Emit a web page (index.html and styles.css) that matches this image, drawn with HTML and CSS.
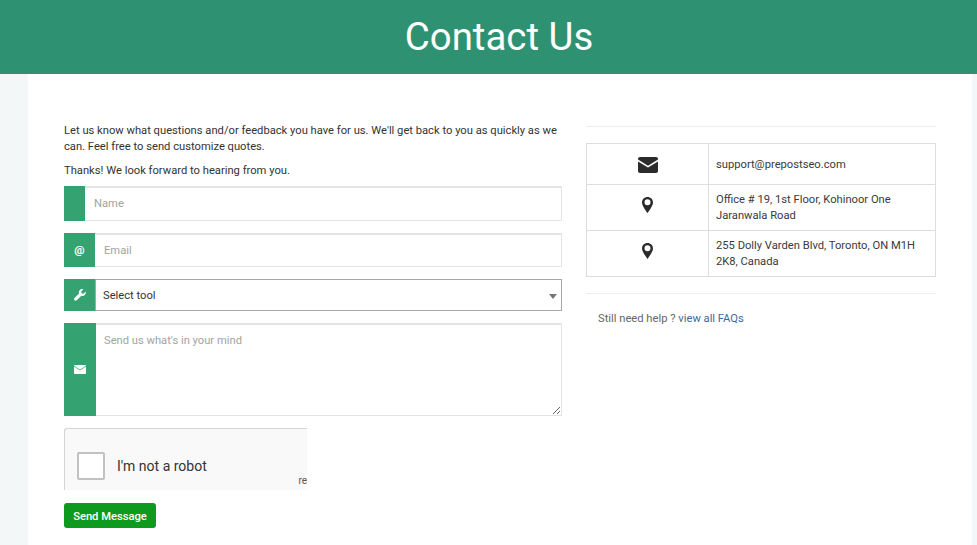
FILE: index.html
```html
<!DOCTYPE html>
<html>
    <head>
        <meta charset="utf-8">
        <title>Contact Us</title>
        <link rel="stylesheet" href="styles.css">
    </head>
    <body>
        <div class="banner"><h1>Contact Us</h1></div>
        <div class="page">
            <div class="form-col">
                <p class="intro">Let us know what questions and/or feedback you have for us. We'll get back to you as quickly as we can. Feel free to send customize quotes.</p>
                <p class="intro thanks">Thanks! We look forward to hearing from you.</p>
                <div class="field field-name">
                    <span class="addon addon-name"></span>
                    <input class="control" type="text" placeholder="Name">
                </div>
                <div class="field field-email">
                    <span class="addon addon-wide"><b class="at">@</b></span>
                    <input class="control" type="text" placeholder="Email">
                </div>
                <div class="field field-select">
                    <span class="addon addon-wide">
                        <svg class="glyph" viewBox="0 0 12 12"><path d="M11.6 2.6 9.5 4.7 7.6 4.3 7.2 2.4 9.3.3C7.9-.2 6.400.2 5.600 1.200 4.800 2.100 4.600 3.400 5 4.500L.5 9c-.6.600-.6 1.600 0 2.300.6.600 1.700.6 2.300 0L7.300 6.800c1.100.4 2.400.2 3.300-.6 1-.9 1.400-2.300 1-3.600Z" fill="#fff"/></svg>
                    </span>
                    <div class="select-box">
                        <span>Select tool</span>
                        <i class="caret"></i>
                    </div>
                </div>
                <div class="field field-msg">
                    <span class="addon addon-tall">
                        <svg class="glyph mail-small" viewBox="0 0 12 9"><path d="M0 .8C0 .3.300 0 .8 0h10.400c.5 0 .8.300.8.800L6 4.700 0 .8Z" fill="#fff"/><path d="M0 1.600 6 5.500l6-3.900v6.600c0 .5-.3.800-.8.800H.8C.3 9 0 8.700 0 8.200V1.600Z" fill="#fff"/></svg>
                    </span>
                    <textarea class="control area" placeholder="Send us what's in your mind"></textarea>
                </div>
                <div class="captcha">
                    <span class="tick"></span>
                    <span class="robot">I'm not a robot</span>
                    <span class="re">re</span>
                </div>
                <button class="send">Send Message</button>
            </div>
            <div class="info-col">
                <table class="info">
                    <tr>
                        <td class="icon-cell icon-mail">
                            <svg class="mail-big" viewBox="0 0 20 16"><path d="M0 2c0-1.100.9-2 2-2h16c1.100 0 2 .9 2 2v.6L10 8.800 0 2.600V2Z" fill="#2b2b2b"/><path d="M0 4.400 10 10.600 20 4.400V14c0 1.100-.9 2-2 2H2c-1.100 0-2-.9-2-2V4.400Z" fill="#2b2b2b"/></svg>
                        </td>
                        <td class="text-cell mail-cell">support@prepostseo.com</td>
                    </tr>
                    <tr>
                        <td class="icon-cell">
                            <svg class="pin" viewBox="0 0 11 16"><path fill-rule="evenodd" d="M5.500 0C8.600 0 11 2.400 11 5.400 11 8.400 7.700 12.900 5.500 16 3.300 12.900 0 8.400 0 5.400 0 2.400 2.400 0 5.500 0Zm0 2.300a3 3 0 1 0 0 6 3 3 0 0 0 0-6Z" fill="#2b2b2b"/></svg>
                        </td>
                        <td class="text-cell">Office # 19, 1st Floor, Kohinoor One Jaranwala Road</td>
                    </tr>
                    <tr>
                        <td class="icon-cell">
                            <svg class="pin" viewBox="0 0 11 16"><path fill-rule="evenodd" d="M5.500 0C8.600 0 11 2.400 11 5.400 11 8.400 7.700 12.900 5.500 16 3.300 12.900 0 8.400 0 5.400 0 2.400 2.400 0 5.500 0Zm0 2.300a3 3 0 1 0 0 6 3 3 0 0 0 0-6Z" fill="#2b2b2b"/></svg>
                        </td>
                        <td class="text-cell">255 Dolly Varden Blvd, Toronto, ON M1H 2K8, Canada</td>
                    </tr>
                </table>
                <p class="help">Still need help ? <a href="#">view all FAQs</a></p>
            </div>
        </div>
    </body>
</html>
```
FILE: styles.css
```css
*{
    box-sizing:border-box;
}
html,body{
    margin:0;
    padding:0;
    height:100%;
    overflow:hidden;
}
body{
    background-color:#f3f7f8;
    font-family:Roboto,"Liberation Sans",sans-serif;
    font-size:11.2px;
    color:#333;
}
.banner{
    height:74px;
    padding:0 7px 0 28px;
    background-color:#2e9272;
    text-align:center;
    color:#fff;
}
.banner h1{
    margin:0;
    font-size:38.4px;
    font-weight:400;
    line-height:74px;
}
.page{
    display:flex;
    margin:0 0 0 28px;
    width:944px;
    height:471px;
    background-color:#fff;
    padding:49px 36px 0 36px;
    gap:24px;
}
.form-col{
    width:498px;
    flex:none;
}
.info-col{
    flex:1;
    margin-top:3px;
    border-top:1px solid #eee;
    padding-top:16px;
}
.intro{
    margin:0;
    line-height:16px;
    color:#333;
}
.thanks{
    margin:8px 0 7px;
}
.field{
    display:flex;
    width:498px;
    margin-bottom:12px;
}
.field-name{
    height:35px;
}
.field-name .control{
    padding-bottom:2px;
}
.field-email{
    height:34px;
}
.field-select{
    height:32px;
}
.field-msg{
    height:93px;
    margin-bottom:12px;
}
.addon{
    display:flex;
    align-items:center;
    justify-content:center;
    flex:none;
    background-color:#34a371;
    color:#fff;
}
.addon-name{
    width:21px;
}
.addon-wide{
    width:31px;
}
.addon-tall{
    width:32px;
}
.at{
    font-size:11.5px;
}
.glyph{
    display:block;
    width:12px;
    height:12px;
}
.mail-small{
    height:9px;
}
.control{
    flex:1;
    min-width:0;
    border:1px solid #e4e4e4;
    border-top-width:2px;
    border-left:0;
    padding:0 9px;
    font-family:inherit;
    font-size:11.2px;
    color:#333;
    outline:none;
}
.control::placeholder{
    color:#a3a3a3;
    opacity:1;
}
.area{
    padding-top:9px;
    padding-left:8px;
    resize:both;
    line-height:14px;
}
.select-box{
    display:flex;
    align-items:center;
    justify-content:space-between;
    flex:1;
    border:1px solid #a6a6a6;
    padding:1px 4px 0 7px;
    color:#333;
}
.caret{
    width:0;
    height:0;
    border-left:4px solid transparent;
    border-right:4px solid transparent;
    border-top:5px solid #777;
    margin-top:2px;
}
.captcha{
    display:flex;
    position:relative;
    align-items:center;
    width:243px;
    height:62px;
    background-color:#f9f9f9;
    border:1px solid #d3d3d3;
    border-width:1px 0 0 1px;
    border-radius:3px 0 0 0;
    padding:12px 0 0 12px;
}
.tick{
    width:28px;
    height:28px;
    background-color:#fff;
    border:2px solid #c1c1c1;
    border-radius:2px;
    flex:none;
}
.robot{
    margin-left:12px;
    font-size:14px;
    color:#333;
}
.re{
    position:absolute;
    right:0;
    bottom:3px;
    font-size:10px;
    line-height:12px;
    color:#555;
}
.send{
    display:block;
    margin-top:13px;
    width:92px;
    height:25px;
    padding:1px 0 0;
    background-color:#0e9a1e;
    border:0;
    border-radius:3px;
    color:#fff;
    font-family:inherit;
    font-size:11.2px;
    font-weight:500;
}
.info{
    width:100%;
    border-collapse:collapse;
}
.info td{
    border:1px solid #ddd;
}
.icon-cell{
    width:122px;
    text-align:center;
    vertical-align:top;
    padding-top:12px;
}
.icon-mail{
    padding-top:13px;
}
.icon-cell svg{
    display:block;
    margin:0 auto;
}
.mail-big{
    width:20px;
    height:16px;
}
.pin{
    width:11px;
    height:16px;
}
.text-cell{
    padding:6px 7px;
    line-height:16px;
    height:41px;
    color:#3a3a3a;
}
.mail-cell{
    padding-top:7px;
    padding-bottom:5px;
}
.info tr:nth-child(n+2) .text-cell{
    height:46px;
}
.help{
    margin:16px 0 0;
    padding:17px 0 0 12px;
    border-top:1px solid #eee;
    color:#666;
    line-height:16px;
}
.help a{
    color:#3d6a9e;
    text-decoration:none;
}
```
